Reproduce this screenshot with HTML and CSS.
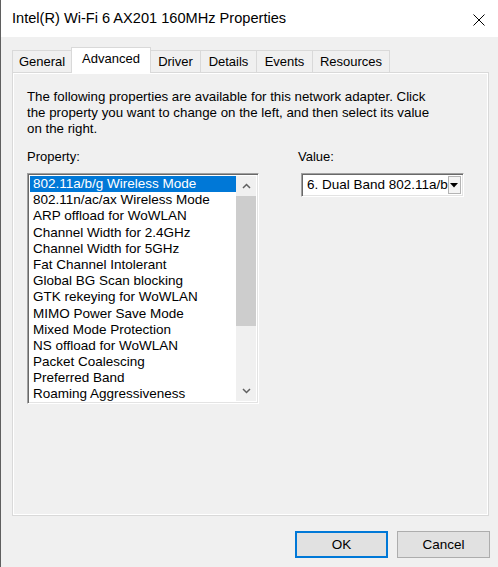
FILE: index.html
```html
<!DOCTYPE html>
<html lang="en">
<head>
    <meta charset="UTF-8">
    <title>Intel(R) Wi-Fi 6 AX201 160MHz Properties</title>
    <link rel="stylesheet" href="styles.css">
</head>
<body>

    <div class="window">

        <!-- Title bar -->
        <div class="titlebar">
            <div class="title">Intel(R) Wi-Fi 6 AX201 160MHz Properties</div>
            <div class="close">
                <svg width="12" height="12" viewBox="0 0 12 12">
                    <path d="M0.5 0.5 L11.5 11.5 M11.5 0.5 L0.5 11.5" stroke="#000" stroke-width="1" fill="none"/>
                </svg>
            </div>
        </div>

        <div class="content">
            <div class="tabs">
                <div class="tab tab-general">General</div>
                <div class="tab tab-advanced active">Advanced</div>
                <div class="tab tab-driver">Driver</div>
                <div class="tab tab-details">Details</div>
                <div class="tab tab-events">Events</div>
                <div class="tab tab-resources">Resources</div>
            </div>

            <div class="panel">
                <p class="intro">The following properties are available for this network adapter. Click<br>the property you want to change on the left, and then select its value<br>on the right.</p>

                <div class="columns">
                    <div class="col-property">
                        <div class="label">Property:</div>
                        <div class="listbox">
                            <div class="items">
                                <div class="item selected">802.11a/b/g Wireless Mode</div>
                                <div class="item">802.11n/ac/ax Wireless Mode</div>
                                <div class="item">ARP offload for WoWLAN</div>
                                <div class="item">Channel Width for 2.4GHz</div>
                                <div class="item">Channel Width for 5GHz</div>
                                <div class="item">Fat Channel Intolerant</div>
                                <div class="item">Global BG Scan blocking</div>
                                <div class="item">GTK rekeying for WoWLAN</div>
                                <div class="item">MIMO Power Save Mode</div>
                                <div class="item">Mixed Mode Protection</div>
                                <div class="item">NS offload for WoWLAN</div>
                                <div class="item">Packet Coalescing</div>
                                <div class="item">Preferred Band</div>
                                <div class="item">Roaming Aggressiveness</div>
                            </div>
                            <div class="scrollbar">
                                <div class="arrow">
                                    <svg width="9" height="6" viewBox="0 0 9 6">
                                        <path d="M1 5 L4.5 1.5 L8 5" stroke="#606060" stroke-width="1.5" fill="none"/>
                                    </svg>
                                </div>
                                <div class="thumb"></div>
                                <div class="track"></div>
                                <div class="arrow">
                                    <svg width="9" height="6" viewBox="0 0 9 6">
                                        <path d="M1 1 L4.5 4.5 L8 1" stroke="#606060" stroke-width="1.5" fill="none"/>
                                    </svg>
                                </div>
                            </div>
                        </div>
                    </div>

                    <div class="col-value">
                        <div class="label">Value:</div>
                        <div class="combo">
                            <div class="combo-text">6. Dual Band 802.11a/b</div>
                            <div class="combo-btn">
                                <svg width="8" height="5" viewBox="0 0 8 5">
                                    <path d="M0 0 L8 0 L4 4.5 Z" fill="#000"/>
                                </svg>
                            </div>
                        </div>
                    </div>
                </div>
            </div>

            <div class="footer">
                <button class="btn btn-default">OK</button>
                <button class="btn">Cancel</button>
            </div>
        </div>
    </div>

</body>
</html>
```

FILE: styles.css
```css
body {
    margin: 0;
    background: #f0f0f0;
    font-family: "Liberation Sans", Arial, sans-serif;
    color: #000;
}

.window {
    width: 497px;
    height: 567px;
    border-left: 1px solid #5f5f5f;
    display: flex;
    flex-direction: column;
    overflow: hidden;
}

/* Title bar */
.titlebar {
    height: 37px;
    background: #fff;
    display: flex;
    align-items: center;
    justify-content: space-between;
    padding: 0 13px 0 11px;
}

.title {
    font-size: 14.6px;
    padding-bottom: 1px;
}

.close {
    display: flex;
    padding-top: 2px;
}

/* Content */
.content {
    padding: 10px 8px 0 11px;
}

.tabs {
    height: 25px;
    display: flex;
    align-items: flex-end;
    font-size: 13px;
}

.tab {
    height: 22px;
    line-height: 22px;
    box-sizing: border-box;
    border: 1px solid #d9d9d9;
    border-bottom: none;
    margin-left: -1px;
    text-align: center;
    background: #f0f0f0;
}

.tab-general { width: 60px; margin-left: 0; }
.tab-advanced { width: 80px; }
.tab-driver { width: 51px; }
.tab-details { width: 57px; }
.tab-events { width: 57px; }
.tab-resources { width: 78px; }

.tab.active {
    height: 26px;
    line-height: 22px;
    background: #fff;
    position: relative;
    z-index: 1;
    margin-bottom: -1px;
}

.panel {
    width: 477px;
    height: 444px;
    box-sizing: border-box;
    border: 1px solid #d9d9d9;
    box-shadow: inset 1px 1px 0 #fff, inset -1px -1px 0 #fff;
    background: #f0f0f0;
    padding: 16px 14px 0 14px;
    font-size: 13px;
}

.intro {
    margin: 0;
    line-height: 16px;
    font-size: 13.3px;
    white-space: nowrap;
}

.columns {
    display: flex;
    margin-top: 12px;
}

.label {
    line-height: 16px;
    margin-bottom: 8px;
}

.col-property {
    width: 232px;
}

.col-value {
    margin-left: 39px;
}

/* Listbox */
.listbox {
    width: 232px;
    height: 231px;
    box-sizing: border-box;
    display: flex;
    background: #fff;
    border-top: 1px solid #a0a0a0;
    border-left: 1px solid #a0a0a0;
    border-right: 1px solid #fff;
    border-bottom: 1px solid #fff;
    box-shadow: inset 1px 1px 0 #696969, inset -1px -1px 0 #e3e3e3;
    padding: 2px;
    font-size: 13.5px;
}

.items {
    flex: 1;
    overflow: hidden;
}

.item {
    height: 16.2px;
    line-height: 16.2px;
    padding-left: 3px;
    white-space: nowrap;
}

.item.selected {
    background: #0078d7;
    color: #fff;
}

.scrollbar {
    width: 20px;
    background: #f0f0f0;
    display: flex;
    flex-direction: column;
}

.arrow {
    height: 20px;
    display: flex;
    align-items: center;
    justify-content: center;
}

.thumb {
    height: 130px;
    background: #cdcdcd;
}

.track {
    flex: 1;
}

/* Combo */
.combo {
    width: 163px;
    height: 24px;
    box-sizing: border-box;
    margin-left: 3px;
    display: flex;
    background: #fff;
    border-top: 1px solid #a0a0a0;
    border-left: 1px solid #a0a0a0;
    border-right: 1px solid #fff;
    border-bottom: 1px solid #fff;
    box-shadow: inset 1px 1px 0 #696969, inset -1px -1px 0 #e3e3e3;
    padding: 2px;
    font-size: 13.5px;
}

.combo-text {
    flex: 1;
    white-space: nowrap;
    line-height: 18px;
    padding-left: 3px;
}

.combo-btn {
    width: 14px;
    box-sizing: border-box;
    border: 1px solid #b4b4b4;
    background: #f4f4f4;
    display: flex;
    align-items: center;
    justify-content: center;
}

/* Footer */
.footer {
    display: flex;
    justify-content: flex-end;
    gap: 9px;
    margin-top: 15px;
}

.btn {
    width: 93px;
    height: 27px;
    background: #e1e1e1;
    border: 1px solid #adadad;
    font-family: "Liberation Sans", Arial, sans-serif;
    font-size: 13.5px;
    color: #000;
    padding: 0;
}

.btn-default {
    border: 1px solid #0078d7;
    box-shadow: inset 0 0 0 1px #0078d7;
}
```
